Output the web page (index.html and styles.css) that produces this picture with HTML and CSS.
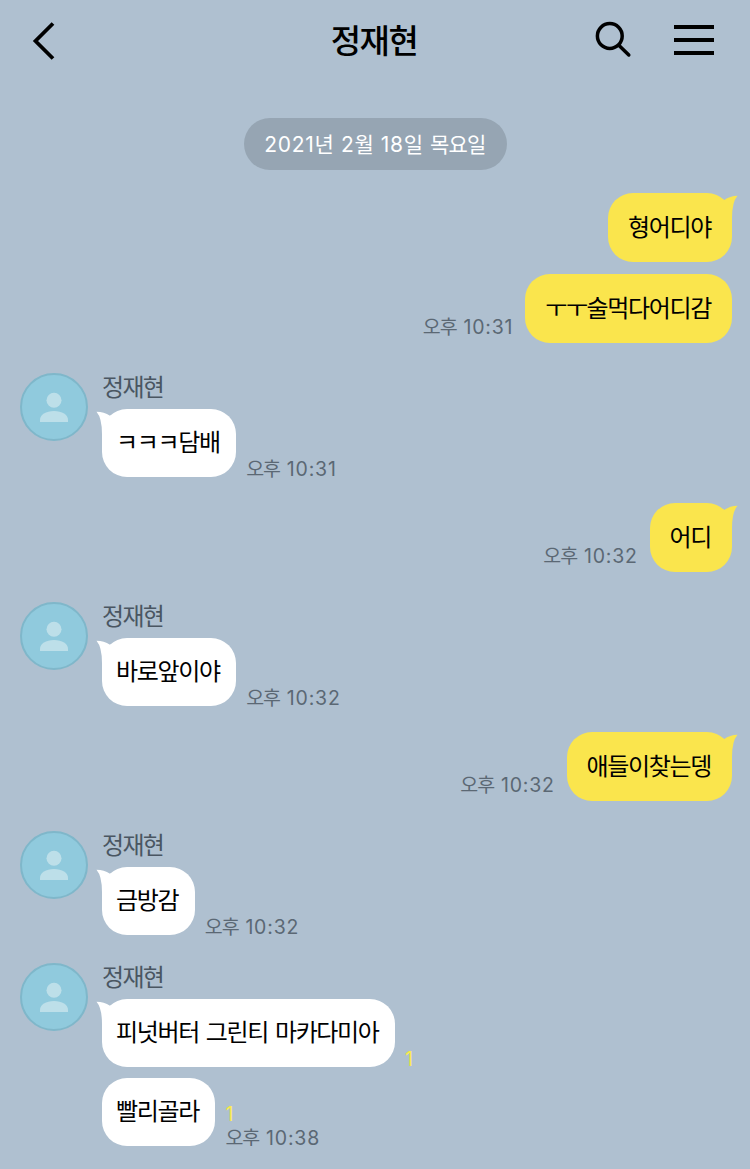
FILE: index.html
```html
<!DOCTYPE html>
<html lang="ko">
<head>
    <meta charset="UTF-8">
    <meta name="viewport" content="width=device-width, initial-scale=1.0">
    <title>정재현</title>
    <link rel="stylesheet" href="styles.css">
</head>
<body>
    <svg class="defs" width="0" height="0">
        <symbol id="person" viewBox="2 2 64 64">
            <circle cx="34" cy="27.3" r="7.5"/>
            <path d="M20 49 V47 C20 41.500 26 38 34 38 C42 38 48 41.500 48 47 V49 Z"/>
        </symbol>
        <symbol id="tail-right" viewBox="0 0 20 26">
            <path d="M0 5 L6 7.200 Q12 2.800 19.500 2.700 Q14 9 14 25 L0 25 Z"/>
        </symbol>
        <symbol id="tail-left" viewBox="0 0 20 26">
            <path d="M20 5 L14 6.800 Q8 2.800 0.500 2.700 Q6 9 6 25 L20 25 Z"/>
        </symbol>
    </svg>

    <header class="header">
        <svg class="icon back" viewBox="0 0 40 44" fill="none" stroke="#000" stroke-width="3.8">
            <path d="M33 5.500 L15.500 23 L33 40.500"/>
        </svg>
        <h1 class="title">정재현</h1>
        <div class="actions">
            <svg class="icon search" viewBox="0 0 40 40" fill="none" stroke="#000" stroke-width="3.5">
                <circle cx="16.800" cy="16" r="12.400"/>
                <path d="M25.800 25.300 L35.800 35" stroke-linecap="round"/>
            </svg>
            <svg class="icon menu" viewBox="0 0 40 30">
                <path d="M0 0H40V4H0Z M0 13H40V17H0Z M0 26H40V30H0Z"/>
            </svg>
        </div>
    </header>

    <main class="chat">
        <div class="date">2021<b>년</b> 2<b>월</b> 18<b>일</b> <b>목요일</b></div>

        <div class="group sent">
            <div class="row">
                <div class="bubble">형어디야<svg class="tail"><use href="#tail-right"/></svg></div>
            </div>
            <div class="row">
                <div class="bubble">ㅜㅜ술먹다어디감</div>
                <div class="time"><b>오후</b> 10:31</div>
            </div>
        </div>

        <div class="group received">
            <svg class="avatar"><use href="#person"/></svg>
            <div class="messages">
                <div class="name">정재현</div>
                <div class="row">
                    <div class="bubble">ㅋㅋㅋ담배<svg class="tail"><use href="#tail-left"/></svg></div>
                    <div class="time"><b>오후</b> 10:31</div>
                </div>
            </div>
        </div>

        <div class="group sent">
            <div class="row">
                <div class="bubble">어디<svg class="tail"><use href="#tail-right"/></svg></div>
                <div class="time"><b>오후</b> 10:32</div>
            </div>
        </div>

        <div class="group received">
            <svg class="avatar"><use href="#person"/></svg>
            <div class="messages">
                <div class="name">정재현</div>
                <div class="row">
                    <div class="bubble">바로앞이야<svg class="tail"><use href="#tail-left"/></svg></div>
                    <div class="time"><b>오후</b> 10:32</div>
                </div>
            </div>
        </div>

        <div class="group sent">
            <div class="row">
                <div class="bubble">애들이찾는뎅<svg class="tail"><use href="#tail-right"/></svg></div>
                <div class="time"><b>오후</b> 10:32</div>
            </div>
        </div>

        <div class="group received">
            <svg class="avatar"><use href="#person"/></svg>
            <div class="messages">
                <div class="name">정재현</div>
                <div class="row">
                    <div class="bubble">금방감<svg class="tail"><use href="#tail-left"/></svg></div>
                    <div class="time"><b>오후</b> 10:32</div>
                </div>
            </div>
        </div>

        <div class="group received again">
            <svg class="avatar"><use href="#person"/></svg>
            <div class="messages">
                <div class="name">정재현</div>
                <div class="row">
                    <div class="bubble">피넛버터 그린티 마카다미아<svg class="tail"><use href="#tail-left"/></svg></div>
                    <div class="unread alone">1</div>
                </div>
                <div class="row">
                    <div class="bubble">빨리골라</div>
                    <div class="meta">
                        <div class="unread">1</div>
                        <div class="time"><b>오후</b> 10:38</div>
                    </div>
                </div>
            </div>
        </div>
    </main>
</body>
</html>
```
FILE: styles.css
```css
* {
    box-sizing: border-box;
}
body {
    margin: 0;
    background-color: #afc0d0;
    font-family: Inter, "Noto Sans CJK KR", sans-serif;
    color: #000;
}
.defs {
    position: absolute;
}
.header {
    display: grid;
    grid-template-columns: 1fr auto 1fr;
    align-items: center;
    height: 80px;
    padding: 0 36px 0 20px;
}
.icon {
    display: block;
}
.back {
    width: 40px;
    height: 44px;
}
.title {
    margin: 2px 0 0 14px;
    font-size: 33px;
    font-weight: 500;
    line-height: 40px;
    letter-spacing: -1.5px;
}
.actions {
    display: flex;
    justify-content: flex-end;
    align-items: center;
    gap: 41px;
}
.search {
    width: 40px;
    height: 40px;
}
.menu {
    width: 40px;
    height: 30px;
}
.chat {
    display: flex;
    flex-direction: column;
    padding: 38px 18px 0 20px;
}
.date {
    align-self: center;
    width: 263px;
    height: 52px;
    margin-right: 2px;
    border-radius: 26px;
    background: #96a5b3;
    color: #fff;
    font-size: 21px;
    line-height: 53px;
    text-align: center;
    white-space: nowrap;
    letter-spacing: 0.7px;
    word-spacing: 1.2px;
}
.date b {
    font-weight: 400;
    letter-spacing: -0.8px;
}
.group {
    display: flex;
}
.sent {
    flex-direction: column;
    gap: 12px;
    margin-top: 26px;
}
.date + .sent {
    margin-top: 23px;
}
.received {
    gap: 14px;
    margin-top: 30px;
}
.again {
    margin-top: 28px;
}
.row {
    display: flex;
    align-items: flex-end;
    gap: 10px;
}
.sent .row {
    flex-direction: row-reverse;
    gap: 12px;
}
.bubble {
    position: relative;
    height: 68px;
    padding: 0 16.5px 0 14px;
    border-radius: 25px;
    background: #fff;
    font-size: 24px;
    line-height: 68px;
    letter-spacing: -1.35px;
    word-spacing: 1.5px;
    white-space: nowrap;
}
.sent .bubble {
    height: 69px;
    padding: 0 21px 0 19.8px;
    background: #fae54d;
    line-height: 70px;
}
.tail {
    position: absolute;
    top: 0;
    left: -6px;
    width: 20px;
    height: 26px;
    fill: #fff;
}
.sent .tail {
    left: auto;
    right: -6px;
    fill: #fae54d;
}
.avatar {
    width: 68px;
    height: 68px;
    border: 2px solid #7fb7ca;
    border-radius: 50%;
    background: #90cadd;
    fill: #bddfe9;
}
.messages {
    display: flex;
    flex-direction: column;
    gap: 11px;
}
.name {
    height: 25px;
    color: #4a5662;
    font-size: 24px;
    line-height: 29px;
    letter-spacing: -1.7px;
}
.time {
    color: #5b6874;
    font-size: 19.5px;
    line-height: 24px;
    letter-spacing: 0.8px;
    word-spacing: 0.5px;
    white-space: nowrap;
    margin-bottom: -4px;
}
.sent .time {
    margin-bottom: 4px;
}
.time b {
    font-weight: 400;
    letter-spacing: -1px;
}
.unread {
    color: #f8ea4b;
    font-size: 19.5px;
    line-height: 24px;
}
.alone {
    margin-bottom: -4px;
}
```
